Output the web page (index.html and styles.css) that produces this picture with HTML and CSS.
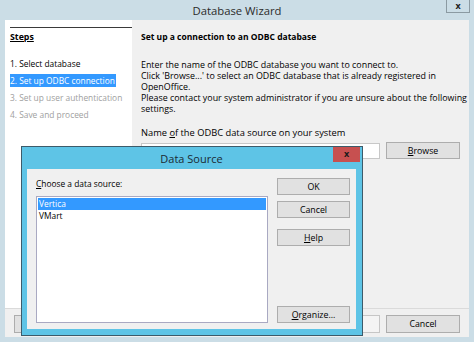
FILE: index.html
```html
<!DOCTYPE html>
<html>
  <head>
    <title>Database Wizard</title>
    <link rel="stylesheet" href="styles.css">
  </head>
  <body>
    <div class="window">
      <div class="titlebar">
        <span class="title">Database Wizard</span>
        <span class="close">x</span>
      </div>
      <div class="client">
        <div class="main">
          <div class="steps">
            <div class="steps-head"><u>Steps</u></div>
            <ol class="step-list">
              <li>1. Select database</li>
              <li><span class="current">2. Set up ODBC connection</span></li>
              <li class="off">3. Set up user authentication</li>
              <li class="off">4. Save and proceed</li>
            </ol>
          </div>
          <div class="page">
            <h2>Set up a connection to an ODBC database</h2>
            <p>
              Enter the name of the ODBC database you want to connect to.<br>
              Click 'Browse...' to select an ODBC database that is already registered in<br>
              OpenOffice.<br>
              Please contact your system administrator if you are unsure about the following<br>
              settings.
            </p>
            <label class="field-label">Name <u>o</u>f the ODBC data source on your system</label>
            <div class="field-row">
              <input type="text" class="field">
              <button class="btn"><u>B</u>rowse</button>
            </div>
          </div>
        </div>
        <div class="buttons">
          <button class="btn">Help</button>
          <div class="spacer"></div>
          <button class="btn">&lt; Back</button>
          <button class="btn">Next &gt;</button>
          <button class="btn disabled">Finish</button>
          <button class="btn">Cancel</button>
        </div>
      </div>
    </div>

    <div class="dialog">
      <div class="dlg-title">
        <span class="title">Data Source</span>
        <span class="dlg-close">x</span>
      </div>
      <div class="dlg-body">
        <div class="dlg-left">
          <label><u>C</u>hoose a data source:</label>
          <ul class="sources">
            <li class="selected">Vertica</li>
            <li>VMart</li>
          </ul>
        </div>
        <div class="dlg-right">
          <button class="btn">OK</button>
          <button class="btn">Cancel</button>
          <button class="btn help"><u>H</u>elp</button>
          <div class="spacer"></div>
          <button class="btn"><u>O</u>rganize...</button>
        </div>
      </div>
    </div>
  </body>
</html>
```

FILE: styles.css
```css
body {
  margin: 0;
  width: 474px;
  height: 342px;
  overflow: hidden;
  font-family: "Open Sans", "Noto Sans", sans-serif;
  font-size: 8.4px;
  color: #000;
  background-color: #cbdde6;
  position: relative;
  white-space: nowrap;
}
.window {
  height: 342px;
  display: flex;
  flex-direction: column;
}
.titlebar {
  height: 20px;
  display: flex;
  align-items: center;
  justify-content: center;
  position: relative;
}
.title {
  font-size: 11.3px;
  color: #2b2b2b;
}
.close {
  position: absolute;
  top: 0;
  right: 4px;
  width: 22px;
  height: 12px;
  border: 1px solid #8b9aa2;
  border-top: none;
  font-size: 9px;
  font-weight: bold;
  line-height: 11px;
  text-align: center;
  color: #222;
}
.client {
  margin: 0 5px;
  height: 317px;
  background-color: #f0f0f0;
  display: flex;
  flex-direction: column;
}
.main {
  height: 288px;
  display: flex;
  border-bottom: 1px solid #dadada;
}
.steps {
  width: 127px;
  flex-shrink: 0;
  background-color: #fff;
  padding-top: 7px;
}
.steps-head {
  margin-left: 5px;
  border-top: 1px solid #3a3a3a;
  line-height: 18px;
  font-weight: bold;
  font-size: 8.8px;
}
.step-list {
  list-style: none;
  margin: 9px 0 0 5px;
  padding: 0;
}
.step-list li {
  line-height: 17px;
}
.step-list .off {
  color: #a0a0a0;
}
.current {
  background-color: #3399ff;
  color: #fff;
  padding: 1px 1px 1px 0;
}
.page {
  flex: 1;
  min-width: 0;
  overflow: hidden;
  padding: 8px 0 0 9px;
  font-size: 8.9px;
}
.page h2 {
  margin: 0;
  font-size: 8.5px;
  font-weight: bold;
  line-height: 18px;
}
.page p {
  margin: 13px 0 0 0;
  line-height: 11px;
}
.field-label {
  display: block;
  margin-top: 13px;
  line-height: 11px;
  font-size: 9.3px;
}
.field-row {
  display: flex;
  gap: 6px;
  margin-top: 4px;
}
.field {
  width: 239px;
  height: 16px;
  box-sizing: border-box;
  border: 1px solid #c8c8c8;
  background: #fff;
  margin: 1px 0 0 0;
  padding: 0;
}
.btn {
  width: 74px;
  height: 17px;
  flex-shrink: 0;
  box-sizing: border-box;
  border: 1px solid #adadad;
  background-color: #e1e1e1;
  font-family: inherit;
  font-size: 8.8px;
  color: #000;
  padding: 0;
}
.btn.disabled {
  background-color: #f4f4f4;
  border-color: #c6c6c6;
  color: #a0a0a0;
}
.buttons {
  flex: 1;
  display: flex;
  gap: 6px;
  padding: 6px 9px 0 9px;
}
.buttons .btn {
  height: 18px;
}
.spacer {
  flex: 1;
}

/* modal on top of the wizard */
.dialog {
  position: absolute;
  left: 21px;
  top: 146px;
  width: 342px;
  height: 190px;
  box-sizing: border-box;
  border: 1px solid #3d5b6a;
  background-color: #5ec4e6;
  display: flex;
  flex-direction: column;
  padding: 0 6px 6px 5px;
}
.dlg-title {
  height: 22px;
  display: flex;
  align-items: center;
  justify-content: center;
  position: relative;
}
.dlg-title .title {
  font-size: 11px;
  color: #1b2a33;
}
.dlg-close {
  position: absolute;
  top: 0;
  right: -4px;
  width: 27px;
  height: 15px;
  background-color: #c75050;
  color: #1a1a1a;
  font-weight: bold;
  font-size: 9px;
  line-height: 14px;
  text-align: center;
}
.dlg-body {
  flex: 1;
  background-color: #f0f0f0;
  display: flex;
  gap: 9px;
  padding: 8px 5px 6px 9px;
}
.dlg-left {
  width: 232px;
  display: flex;
  flex-direction: column;
}
.dlg-left label {
  line-height: 13px;
}
.sources {
  flex: 1;
  list-style: none;
  margin: 6px 0 0 0;
  padding: 1px;
  background: #fff;
  border: 1px solid #a9a9c2;
}
.sources li {
  line-height: 12px;
  padding-left: 1px;
}
.sources .selected {
  background-color: #3399ff;
  color: #fff;
}
.dlg-right {
  display: flex;
  flex-direction: column;
  gap: 6px;
  padding-top: 1px;
}
.dlg-right .btn {
  width: 73px;
}
.dlg-right .help {
  margin-top: 5px;
}
```
